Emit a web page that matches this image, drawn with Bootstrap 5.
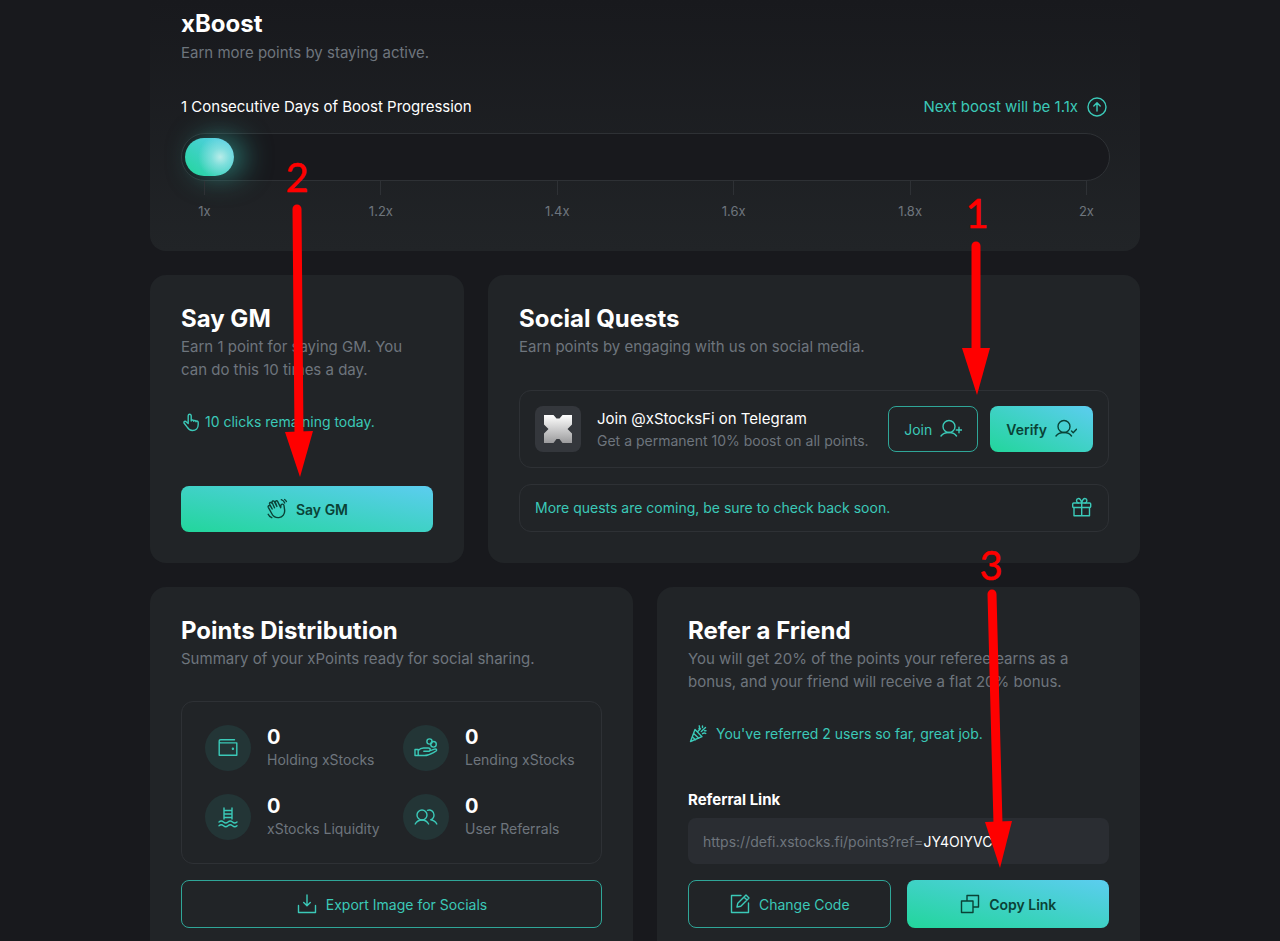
<!DOCTYPE html>
<html lang="en" data-bs-theme="dark">
<head>
<meta charset="utf-8">
<meta name="viewport" content="width=device-width, initial-scale=1">
<title>xPoints</title>
<link href="https://cdn.jsdelivr.net/npm/bootstrap@5.3.0/dist/css/bootstrap.min.css" rel="stylesheet">
<style>
  :root { --page: #18191d; --panel: #212427; --line: #2e3135; --dim: #6e757d; --teal: #3bc9b8; --teal-line: #2fa698; --ink: #0a4236; }
  body { background: var(--page); color: #fff; font-family: Inter, "Liberation Sans", sans-serif; font-size: 15px; line-height: 23px; padding-left: 10px; overflow: hidden; }
  .points-page { max-width: 990px; height: 100vh; }
  .panel { background: var(--panel); border-radius: 16px; padding: 31px; }
  .panel-boost { background: linear-gradient(var(--page), var(--panel)); border-radius: 0 0 16px 16px; padding: 11px 30px 30px 31px; }
  .panel h2 { font-size: 24px; line-height: 26px; font-weight: 700; margin: 0 0 3px; }
  .panel-boost h2 { margin-bottom: 4px; }
  .dim { color: var(--dim); }
  .teal { color: var(--teal); }
  .desc { color: var(--dim); margin: 0; }
  .fs-mid { font-size: 14px; line-height: 22px; }
  svg { flex: none; fill: none; stroke: currentColor; stroke-width: 1.4; stroke-linecap: round; stroke-linejoin: round; }
  .boost-head { line-height: 22px; margin: 32px 0 15px; padding-right: 2px; }
  .boost-track { height: 48px; border: 1px solid var(--line); border-radius: 24px; background: var(--page); padding: 4px 3px; }
  .boost-fill { height: 38px; min-width: 49px; border-radius: 19px; background: radial-gradient(circle at 72% 50%, #b9ece9 0, rgba(150,228,226,.7) 22%, transparent 55%), linear-gradient(to top right, #22d69b, #5ccdf0); box-shadow: 10px 0 28px rgba(59,201,184,.55); }
  .ticks { padding: 0 23px; }
  .tick { width: 1px; font-size: 13px; line-height: 20px; }
  .tick::before { content: ""; width: 1px; height: 14px; background: var(--line); margin-bottom: 6px; }
  .box { border: 1px solid var(--line); border-radius: 12px; padding: 15px; }
  .status-line { margin-top: 30px; }
  .btn { --bs-btn-border-radius: 8px; height: 46px; padding: 0 15px; font-size: 14px; display: flex; align-items: center; justify-content: center; gap: 8px; }
  .btn-tall { height: 48px; }
  .btn-line { --bs-btn-color: var(--teal); --bs-btn-border-color: var(--teal-line); --bs-btn-hover-color: #fff; --bs-btn-hover-border-color: var(--teal); }
  .btn-glow { --bs-btn-color: var(--ink); --bs-btn-hover-color: var(--ink); border: 0; padding: 0 16px; background: linear-gradient(to top right, #22d69b, #5ccdf0); font-weight: 600; }
  .quest { margin-top: 32px; }
  .quest-logo { width: 46px; height: 46px; border-radius: 8px; background: #34373c; }
  .quest-actions { gap: 12px; }
  .more-quests { height: 48px; margin-top: 16px; }
  .stat-grid { display: grid; grid-template-columns: 1fr 1fr; gap: 23px; padding: 23px; margin-top: 31px; }
  .stat-icon { width: 46px; height: 46px; background: #233536; }
  .stat-value { font-size: 20px; line-height: 24px; font-weight: 700; }
  .ref-label { margin: 43px 0 7px; }
  .link-field { height: 46px; border-radius: 8px; background: #2a2d32; padding: 0 15px; font-size: 14px; white-space: nowrap; }
  .link-field input { background: none; border: 0; padding: 0; color: #fff; width: 0; outline: 0; }
  .notes { position: absolute; top: 0; left: 0; pointer-events: none; }
  .notes text { font-family: Lato, sans-serif; font-size: 40px; fill: #f00; stroke: #f00; stroke-width: .5; text-anchor: middle; }
  .notes line { stroke: #f00; stroke-width: 9; }
  .notes polygon { fill: #f00; stroke: none; }
</style>
</head>
<body>
<main class="points-page position-relative mx-auto">

  <section class="panel panel-boost mb-4">
    <h2>xBoost</h2>
    <p class="desc">Earn more points by staying active.</p>
    <div class="boost-head d-flex justify-content-between align-items-center">
      <span>1 Consecutive Days of Boost Progression</span>
      <span class="teal d-flex align-items-center gap-2">Next boost will be 1.1x
        <svg width="22" height="22" viewBox="0 0 22 22"><circle cx="11" cy="11" r="9"/><path d="M11 15V7M7.800 10 11 6.800l3.200 3.200"/></svg>
      </span>
    </div>
    <div class="boost-track"><div class="boost-fill" style="width:5%"></div></div>
    <div class="ticks dim d-flex justify-content-between">
      <div class="tick d-flex flex-column align-items-center">1x</div>
      <div class="tick d-flex flex-column align-items-center">1.2x</div>
      <div class="tick d-flex flex-column align-items-center">1.4x</div>
      <div class="tick d-flex flex-column align-items-center">1.6x</div>
      <div class="tick d-flex flex-column align-items-center">1.8x</div>
      <div class="tick d-flex flex-column align-items-center">2x</div>
    </div>
  </section>

  <div class="row g-4">
    <div class="col-4">
      <section class="panel h-100 d-flex flex-column">
        <h2>Say GM</h2>
        <p class="desc pe-3">Earn 1 point for saying GM. You can do this 10 times a day.</p>
        <div class="status-line teal fs-mid d-flex align-items-center gap-1">
          <svg width="20" height="20" viewBox="0 0 20 20"><path d="M7.200 11.500V3.700a1.500 1.500 0 0 1 3 0V9c0-1.300 2.500-1.300 2.500.3 0-1.300 2.300-1.100 2.300.4 0-1.100 2.200-1 2.200.6v2.200c0 3.700-2.400 6-5.700 6-2.600 0-4.200-1.300-5.300-3.300L3 11c-.6-1.600 1.200-2.300 2.200-1.200z"/></svg>
          10 clicks remaining today.
        </div>
        <button type="button" class="btn btn-glow mt-auto">
          <svg width="22" height="22" viewBox="0 0 22 22"><path d="M8.500 9.800 6.200 4.700C5.500 3 7.600 2.200 8.400 3.700l2.500 4.800-1.500-4c-.5-1.700 1.500-2.400 2.300-.9l3 6.200.2-2.400c.2-1.900 2.900-1.600 3.100.1l.6 4.300c.5 4-2 7.400-5.700 7.800-3.200.3-5.800-1.300-7.200-4.100L2.300 9.300C1.500 7.700 3.600 6.700 4.500 8.200L6.200 11 3.700 6.200C3 4.600 5 3.600 5.900 5.200M15.300 1.700c1.700.6 2.800 1.700 3.400 3.300M18.600 1.500c.8.500 1.400 1.200 1.800 2M2.200 16.300c.7 1.600 1.900 2.700 3.600 3.400"/></svg>
          Say GM
        </button>
      </section>
    </div>

    <div class="col-8">
      <section class="panel h-100">
        <h2>Social Quests</h2>
        <p class="desc">Earn points by engaging with us on social media.</p>
        <div class="box quest d-flex align-items-center">
          <div class="quest-logo d-flex align-items-center justify-content-center me-3">
            <svg width="28" height="28" viewBox="0 0 28 28"><defs><linearGradient id="metal" x2="0" y2="1"><stop stop-color="#fff"/><stop offset="1" stop-color="#9b9b9d"/></linearGradient></defs><path fill="url(#metal)" stroke="none" d="M0 0h9.500l3 3.500h3l3-3.500H28v9.500L23.500 14l4.500 4.500V28h-9.500l-3-4h-3l-3 4H0v-9.500L4.500 14 0 9.500z"/></svg>
          </div>
          <div class="flex-grow-1">
            <div>Join @xStocksFi on Telegram</div>
            <div class="dim fs-mid">Get a permanent 10% boost on all points.</div>
          </div>
          <div class="quest-actions d-flex">
            <button type="button" class="btn btn-line">Join
              <svg width="22" height="22" viewBox="0 0 22 22"><circle cx="9" cy="8.500" r="6"/><path d="M1 18c1.700-2.400 4.500-3.500 8-3.500s6 1.200 7.500 3.500M19 9.300v5.400M16.300 12h5.400"/></svg>
            </button>
            <button type="button" class="btn btn-glow">Verify
              <svg width="22" height="22" viewBox="0 0 22 22"><circle cx="9" cy="8.500" r="6"/><path d="M1 18c1.700-2.400 4.500-3.500 8-3.500s6 1.200 7.500 3.500M16.500 13l1.700 1.700 3.300-3.500"/></svg>
            </button>
          </div>
        </div>
        <div class="more-quests box teal fs-mid d-flex align-items-center justify-content-between">
          More quests are coming, be sure to check back soon.
          <svg width="22" height="22" viewBox="0 0 22 22"><rect x="1.700" y="6" width="18" height="4.500" rx="1"/><path d="M3 10.500v8.300h15.500v-8.300M10.700 6v12.800M10.700 6C10 3 8.500 1.300 7 1.600 5 2 5 5.500 7.300 6M10.700 6c.7-3 2.200-4.700 3.700-4.400 2 .4 2 3.900-.3 4.400"/></svg>
        </div>
      </section>
    </div>

    <div class="col-6">
      <section class="panel h-100">
        <h2>Points Distribution</h2>
        <p class="desc">Summary of your xPoints ready for social sharing.</p>
        <div class="box stat-grid">
          <div class="d-flex align-items-center gap-3">
            <div class="stat-icon teal rounded-circle d-flex align-items-center justify-content-center"><svg width="22" height="22" viewBox="0 0 22 22"><path d="M17.500 2.700H3.700a1.600 1.600 0 0 0 0 3.200h16.100v12.400H2.200v-14"/><circle cx="15.900" cy="11.700" r=".5" fill="currentColor"/></svg></div>
            <div><div class="stat-value">0</div><div class="dim fs-mid">Holding xStocks</div></div>
          </div>
          <div class="d-flex align-items-center gap-3">
            <div class="stat-icon teal rounded-circle d-flex align-items-center justify-content-center"><svg width="24" height="24" viewBox="0 0 24 24"><circle cx="15.500" cy="5.500" r="2.600"/><circle cx="19.500" cy="8.300" r="2.800"/><path d="M1 13.500h3.200v6H1zM4.200 14.500C6 12.500 7.500 12 9.500 12h4.800c2.500 0 2.500 3.300 0 3.300H9.800M15.500 14.900l5-1.700c2.300-.7 2.900 1.300 1 2.200-3.800 2-6.500 4.100-11 4.100H4.200"/></svg></div>
            <div><div class="stat-value">0</div><div class="dim fs-mid">Lending xStocks</div></div>
          </div>
          <div class="d-flex align-items-center gap-3">
            <div class="stat-icon teal rounded-circle d-flex align-items-center justify-content-center"><svg width="24" height="24" viewBox="0 0 24 24"><path d="M8 3v11M16 3v11M8 5.500h8M8 9h8M8 12.500h8M3 17c1.500-1.300 3-1.300 4.500 0s3 1.300 4.500 0 3-1.300 4.500 0 3 1.300 4.500 0M3 20.700c1.500-1.300 3-1.300 4.500 0s3 1.300 4.500 0 3-1.300 4.500 0 3 1.300 4.500 0"/></svg></div>
            <div><div class="stat-value">0</div><div class="dim fs-mid">xStocks Liquidity</div></div>
          </div>
          <div class="d-flex align-items-center gap-3">
            <div class="stat-icon teal rounded-circle d-flex align-items-center justify-content-center"><svg width="24" height="24" viewBox="0 0 24 24"><circle cx="8" cy="10" r="5"/><path d="M1.200 19c1.400-2.500 3.800-4 6.800-4s5.200 1.500 6.600 4M13.500 5.300c3.200-1.200 6.500 1.200 6.500 4.700 0 2.300-1.300 4-3.300 4.800 2.700.3 4.700 1.700 6.100 4.200"/></svg></div>
            <div><div class="stat-value">0</div><div class="dim fs-mid">User Referrals</div></div>
          </div>
        </div>
        <button type="button" class="btn btn-line btn-tall w-100 mt-3">
          <svg width="22" height="22" viewBox="0 0 22 22"><path d="M2.500 12.500v7h17v-7M11 2v10.500M7.700 9.500l3.300 3.300 3.300-3.300"/></svg>
          Export Image for Socials
        </button>
      </section>
    </div>

    <div class="col-6">
      <section class="panel h-100">
        <h2>Refer a Friend</h2>
        <p class="desc">You will get 20% of the points your referee earns as a bonus, and your friend will receive a flat 20% bonus.</p>
        <div class="status-line teal fs-mid d-flex align-items-center gap-2">
          <svg width="20" height="20" viewBox="0 0 20 20"><path d="M7 5.500 14 12.700 2.500 17.500zM5.700 9.500l5.100 4.700M4.500 13l3 2.700M9.500 7.800l3-3M11 4.800c.8-1 .8-2 .2-3M13.300 7.500 17.500 3.500M14.500 9.700c1.200-.8 2.300-.8 3.300-.2M14.500 3.500V2M16.500 6.700H18"/></svg>
          You've referred 2 users so far, great job.
        </div>
        <label for="refcode" class="d-block fw-bold ref-label">Referral Link</label>
        <div class="link-field d-flex align-items-center">
          <span class="dim">https://defi.xstocks.fi/points?ref=</span>
          <input id="refcode" class="flex-grow-1" type="text" value="JY4OIYVC" readonly>
        </div>
        <div class="row gx-3 mt-3">
          <div class="col-6"><button type="button" class="btn btn-line btn-tall w-100">
            <svg width="22" height="22" viewBox="0 0 22 22"><path d="M12 2.500H2.500v17h17V10M8 14l.8-3.800L17 2l3 3-8.200 8.200zM15 4l3 3"/></svg>
            Change Code</button></div>
          <div class="col-6"><button type="button" class="btn btn-glow btn-tall w-100">
            <svg width="22" height="22" viewBox="0 0 22 22"><path d="M2.500 8h11.500v11.500H2.500zM8 8V2.500h11.500V14H14"/></svg>
            Copy Link</button></div>
        </div>
      </section>
    </div>
  </div>

  <!-- Numbered walkthrough arrows -->
  <svg class="notes" width="990" height="900" viewBox="0 0 990 900">
    <text x="147" y="192">2</text><line x1="147" y1="209" x2="149" y2="434"/><polygon points="135,432 163,431 150,477"/>
    <text x="827" y="228">1</text><line x1="826" y1="246" x2="826" y2="350"/><polygon points="812,348 840,348 827,395"/>
    <text x="841" y="580">3</text><line x1="842" y1="594" x2="848" y2="824"/><polygon points="835,822 862,821 850,868"/>
  </svg>
</main>
<script src="https://cdn.jsdelivr.net/npm/bootstrap@5.3.0/dist/js/bootstrap.bundle.min.js"></script>
</body>
</html>
